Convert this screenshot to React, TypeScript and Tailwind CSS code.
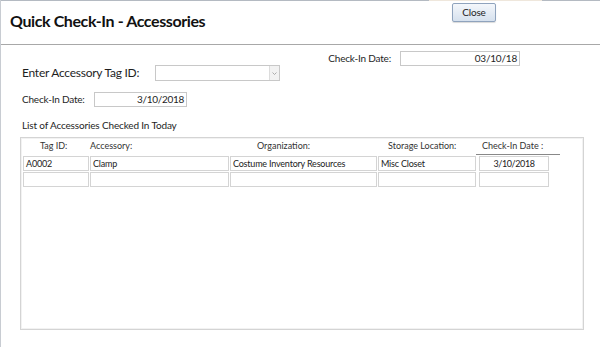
import React from "react";

const font = { fontFamily: 'Lato, "Open Sans", Arial, sans-serif' };

function Cell({ w, children, center }: { w: string; children?: React.ReactNode; center?: boolean }) {
  return (
    <div
      className={`${w} shrink-0 h-[15px] border border-[#d4d4d4] bg-white px-[2px] text-[9px] tracking-[-0.2px] leading-[13px] text-[#222] whitespace-nowrap overflow-hidden ${center ? "text-center" : "text-left"}`}
    >
      {children}
    </div>
  );
}

function Row({ values }: { values?: string[] }) {
  const v = values ?? ["", "", "", "", ""];
  return (
    <div className="flex">
      <Cell w="w-[66px]">{v[0]}</Cell>
      <div className="w-[1px] shrink-0" />
      <Cell w="w-[139px]">{v[1]}</Cell>
      <div className="w-[1px] shrink-0" />
      <Cell w="w-[147px]">{v[2]}</Cell>
      <div className="w-[1px] shrink-0" />
      <Cell w="w-[98px]">{v[3]}</Cell>
      <div className="w-[3px] shrink-0" />
      <Cell w="w-[70px]" center>
        <span className="tracking-[-0.4px]">{v[4]}</span>
      </Cell>
    </div>
  );
}

export default function App() {
  return (
    <div style={font} className="w-[600px] h-[347px] bg-white border-l border-[#c8ccd2] flex flex-col overflow-hidden text-[#1e1e1e] whitespace-nowrap">
      <div className="flex h-[1px] shrink-0">
        <div className="w-[428px] bg-[#b4bac2]" />
        <div className="w-[113px] bg-[#efe7dc]" />
        <div className="flex-1 bg-[#b4bac2]" />
      </div>
      <div className="h-[44px] shrink-0 border-b border-[#a8a8a8] flex items-start">
        <div className="pl-[9px] pt-[9px] text-[16px] font-bold tracking-[-0.4px] leading-[22px] text-[#111]">
          Quick Check-In - Accessories
        </div>
        <div className="ml-auto mr-[104px] mt-[2px] w-[44px] h-[19px] rounded-[2px] border border-[#8fa3bd] bg-gradient-to-b from-[#f4f7fb] to-[#d6e1ee] shadow-[0_1px_1px_rgba(0,0,0,0.15)] text-[10px] tracking-[-0.2px] leading-[17px] text-center text-[#222]">
          Close
        </div>
      </div>
      <div className="flex flex-col pl-[19px] pr-[16px]">
        <div className="flex items-center justify-end h-[15px] mt-[6px]">
          <span className="text-[10px] tracking-[-0.2px] mr-[9px]">Check-In Date:</span>
          <div className="w-[120px] h-[15px] border border-[#c8c8c8] text-[10px] tracking-[-0.2px] leading-[13px] text-right pr-[2px] mr-[64px]">03/10/18</div>
        </div>
        <div className="flex items-center h-[16px] -mt-[1px]">
          <span className="text-[12px] tracking-[-0.25px] w-[135px] shrink-0 pl-[2px]">Enter Accessory Tag ID:</span>
          <div className="w-[125px] h-[16px] border border-[#c8c8c8] flex justify-end">
            <div className="w-[10px] h-full border-l border-[#dcdcdc] bg-[#f2f2f2] flex items-center justify-center">
              <svg width="5" height="3" viewBox="0 0 5 3"><path d="M0.5 0.5 L2.5 2.5 L4.5 0.5" stroke="#999" fill="none" strokeWidth="0.8" /></svg>
            </div>
          </div>
        </div>
        <div className="flex items-center h-[15px] mt-[11px]">
          <span className="text-[10px] tracking-[-0.2px] w-[74px] shrink-0 pl-[2px]">Check-In Date:</span>
          <div className="w-[93px] h-[15px] border border-[#c8c8c8] text-[10px] tracking-[-0.3px] leading-[13px] text-right pr-[2px]">3/10/2018</div>
        </div>
        <div className="text-[10px] tracking-[-0.15px] leading-[14px] mt-[11px] pl-[2px]">List of Accessories Checked In Today</div>
        <div className="mt-[5px] w-[564px] h-[193px] border border-[#d4d4d4] shadow-[inset_0_0_0_1px_#f2f2f2] flex flex-col pl-[2px]">
          <div className="flex h-[17px] text-[9px] leading-[15px] text-[#333]">
            <div className="w-[66px] shrink-0 pl-[17px]">Tag ID:</div>
            <div className="w-[140px] shrink-0 pl-[1px]">Accessory:</div>
            <div className="w-[148px] shrink-0 pl-[28px]">Organization:</div>
            <div className="w-[99px] shrink-0 pl-[11px]">Storage Location:</div>
            <div className="w-[84px] shrink-0 pl-[6px] border-b border-[#888]">Check-In Date :</div>
          </div>
          <div className="flex flex-col gap-[1px] mt-[1px]">
            <Row values={["A0002", "Clamp", "Costume Inventory Resources", "Misc Closet", "3/10/2018"]} />
            <Row />
          </div>
        </div>
      </div>
    </div>
  );
}
